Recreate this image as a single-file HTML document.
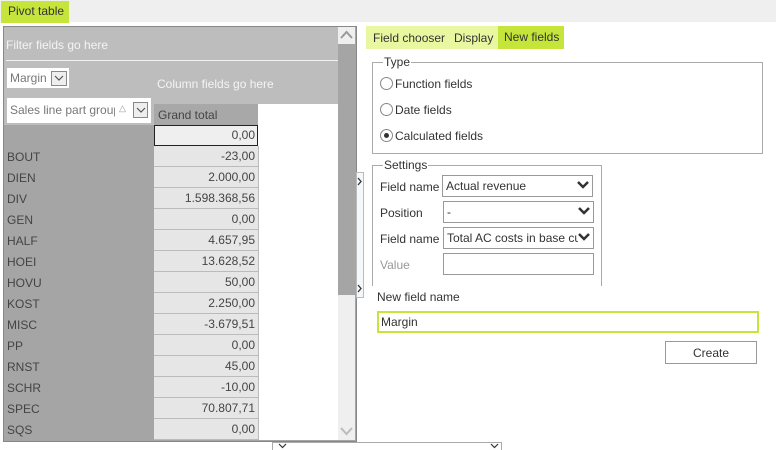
<!DOCTYPE html>
<html><head><style>
body{margin:0;width:776px;height:450px;position:relative;background:#fff;font-family:"Liberation Sans",sans-serif;font-size:12px;color:#333;overflow:hidden}
.a{position:absolute}
.lbl{position:absolute;left:7px;font-size:12px;color:#444}
.v{position:absolute;left:154px;width:101px;height:20px;background:#e6e6e6;border-bottom:1px solid #bbb;border-right:1px solid #bbb;text-align:right;padding-right:3px;line-height:20px;font-size:12px;color:#444}
.sel{position:absolute;left:443px;border:1px solid #999;background:#fff;line-height:20px;padding-left:3px;box-sizing:border-box;width:151px;height:22px}
.chev{position:absolute;right:3px;top:4px}
.radio{position:absolute;left:380px;width:11px;height:11px;border:1px solid #888;border-radius:50%;background:#fff}
</style></head><body>
<div class="a" style="left:0;top:0;width:776px;height:22px;background:#efefef"></div>
<div class="a" style="left:1px;top:1px;width:68px;height:22px;background:#c5e53a;line-height:21px;padding-left:7px;box-sizing:border-box;font-size:12px;color:#333">Pivot table</div>

<div class="a" style="left:3px;top:26px;width:352px;height:414px;border:1px solid #888;background:#a5a5a5"></div>
<div class="a" style="left:4px;top:27px;width:334px;height:98px;background:#bdbdbd"></div>
<div class="a" style="left:6px;top:60px;width:332px;height:1px;background:#f2f2f2"></div>
<div class="a" style="left:6px;top:38px;color:#f4f4f4;font-size:12px">Filter fields go here</div>
<div class="a" style="left:157px;top:77px;color:#f4f4f4;font-size:12px">Column fields go here</div>
<div class="a" style="left:7px;top:68px;width:62px;height:20px;background:#fff"></div>
<div class="a" style="left:10px;top:71px;color:#777">Margin</div>
<div class="a" style="left:51px;top:71px;width:14px;height:13px;border:1px solid #888;background:#eee"><svg class="a" style="left:2px;top:3px" width="10" height="7"><path d="M1 1 L5 5 L9 1" stroke="#555" stroke-width="1.2" fill="none"/></svg></div>
<div class="a" style="left:7px;top:98px;width:144px;height:25px;background:#fff"></div>
<div class="a" style="left:10px;top:103px;color:#777;width:105px;overflow:hidden;white-space:nowrap">Sales line part group</div>
<div class="a" style="left:119px;top:103px;color:#999;font-size:9px">△</div>
<div class="a" style="left:133px;top:102px;width:13px;height:14px;border:1px solid #888;background:#eee"><svg class="a" style="left:2px;top:4px" width="10" height="7"><path d="M1 1 L5 5 L9 1" stroke="#555" stroke-width="1.2" fill="none"/></svg></div>
<div class="a" style="left:258px;top:104px;width:80px;height:336px;background:#fff"></div>
<div class="a" style="left:154px;top:104px;width:104px;height:336px;background:#e6e6e6"></div>
<div class="a" style="left:154px;top:104px;width:104px;height:21px;background:#a8a8a8;line-height:22px;padding-left:4px;box-sizing:border-box;color:#444">Grand total</div>
<div class="a" style="left:154px;top:125px;width:100px;height:19px;border:1px solid #222;background:#efefef;text-align:right;padding-right:2px;line-height:19px;color:#444">0,00</div>
<div class="lbl" style="top:150px">BOUT</div><div class="v" style="top:146px">-23,00</div>
<div class="lbl" style="top:171px">DIEN</div><div class="v" style="top:167px">2.000,00</div>
<div class="lbl" style="top:192px">DIV</div><div class="v" style="top:188px">1.598.368,56</div>
<div class="lbl" style="top:213px">GEN</div><div class="v" style="top:209px">0,00</div>
<div class="lbl" style="top:234px">HALF</div><div class="v" style="top:230px">4.657,95</div>
<div class="lbl" style="top:255px">HOEI</div><div class="v" style="top:251px">13.628,52</div>
<div class="lbl" style="top:276px">HOVU</div><div class="v" style="top:272px">50,00</div>
<div class="lbl" style="top:297px">KOST</div><div class="v" style="top:293px">2.250,00</div>
<div class="lbl" style="top:318px">MISC</div><div class="v" style="top:314px">-3.679,51</div>
<div class="lbl" style="top:339px">PP</div><div class="v" style="top:335px">0,00</div>
<div class="lbl" style="top:360px">RNST</div><div class="v" style="top:356px">45,00</div>
<div class="lbl" style="top:381px">SCHR</div><div class="v" style="top:377px">-10,00</div>
<div class="lbl" style="top:402px">SPEC</div><div class="v" style="top:398px">70.807,71</div>
<div class="lbl" style="top:423px">SQS</div><div class="v" style="top:419px">0,00</div>
<div class="a" style="left:338px;top:27px;width:17px;height:413px;background:#efefef"></div>
<div class="a" style="left:338px;top:44px;width:17px;height:251px;background:#a5a5a5"></div>
<svg class="a" style="left:340px;top:30px" width="13" height="10"><path d="M1 8 L6.5 2 L12 8" stroke="#999" stroke-width="2" fill="none"/></svg>
<svg class="a" style="left:340px;top:426px" width="13" height="10"><path d="M1 2 L6.5 8 L12 2" stroke="#bbb" stroke-width="2" fill="none"/></svg>
<div class="a" style="left:356px;top:172px;width:6px;height:124px;border:1px solid #bbb;background:#f4f8fb"></div>
<svg class="a" style="left:357px;top:177px" width="6" height="9"><path d="M1 1 L4 4.5 L1 8" stroke="#333" stroke-width="1.3" fill="none"/></svg>
<svg class="a" style="left:357px;top:284px" width="6" height="9"><path d="M1 1 L4 4.5 L1 8" stroke="#333" stroke-width="1.3" fill="none"/></svg>

<div class="a" style="left:366px;top:26px;width:132px;height:23px;background:#e8f7a0"></div>
<div class="a" style="left:373px;top:31px">Field chooser</div>
<div class="a" style="left:454px;top:31px">Display</div>
<div class="a" style="left:498px;top:26px;width:66px;height:23px;background:#c5e53a"></div>
<div class="a" style="left:504px;top:30px">New fields</div>

<div class="a" style="left:372px;top:62px;width:389px;height:90px;border:1px solid #aaa"></div>
<div class="a" style="left:383px;top:55px;background:#fff;padding:0 1px">Type</div>
<div class="radio" style="top:77px"></div><div class="a" style="left:395px;top:77px">Function fields</div>
<div class="radio" style="top:103px"></div><div class="a" style="left:395px;top:103px">Date fields</div>
<div class="radio" style="top:129px"></div><div class="a" style="left:384px;top:133px;width:5px;height:5px;border-radius:50%;background:#333"></div><div class="a" style="left:395px;top:129px">Calculated fields</div>

<div class="a" style="left:372px;top:165px;width:228px;height:120px;border:1px solid #aaa;border-bottom:none"></div>
<div class="a" style="left:383px;top:158px;background:#fff;padding:0 1px">Settings</div>
<div class="a" style="left:380px;top:180px">Field name</div>
<div class="sel" style="left:442px;top:175px">Actual revenue<svg class="chev" width="12" height="10"><path d="M1 2 L6 7 L11 2" stroke="#333" stroke-width="2.5" fill="none"/></svg></div>
<div class="a" style="left:380px;top:206px">Position</div>
<div class="sel" style="top:201px">-<svg class="chev" width="12" height="10"><path d="M1 2 L6 7 L11 2" stroke="#333" stroke-width="2.5" fill="none"/></svg></div>
<div class="a" style="left:380px;top:232px">Field name</div>
<div class="sel" style="top:227px;overflow:hidden;white-space:nowrap">Total AC costs in base cu<svg class="chev" style="background:#fff" width="12" height="10"><path d="M1 2 L6 7 L11 2" stroke="#333" stroke-width="2.5" fill="none"/></svg></div>
<div class="a" style="left:380px;top:258px;color:#999">Value</div>
<div class="sel" style="top:253px"></div>

<div class="a" style="left:377px;top:290px">New field name</div>
<div class="a" style="left:377px;top:311px;width:382px;height:22px;border:2px solid #c5e53a;box-sizing:border-box;padding-left:2px;line-height:18px">Margin</div>
<div class="a" style="left:665px;top:341px;width:92px;height:23px;border:1px solid #999;box-sizing:border-box;text-align:center;line-height:22px">Create</div>

<div class="a" style="left:272px;top:442px;width:230px;height:8px;border:1px solid #aaa;box-sizing:border-box;border-bottom:none"></div>
<svg class="a" style="left:278px;top:443px" width="9" height="6"><path d="M1 1 L4.5 4.5 L8 1" stroke="#333" stroke-width="1.2" fill="none"/></svg>
<svg class="a" style="left:490px;top:443px" width="9" height="6"><path d="M1 1 L4.5 4.5 L8 1" stroke="#333" stroke-width="1.2" fill="none"/></svg>
</body></html>
